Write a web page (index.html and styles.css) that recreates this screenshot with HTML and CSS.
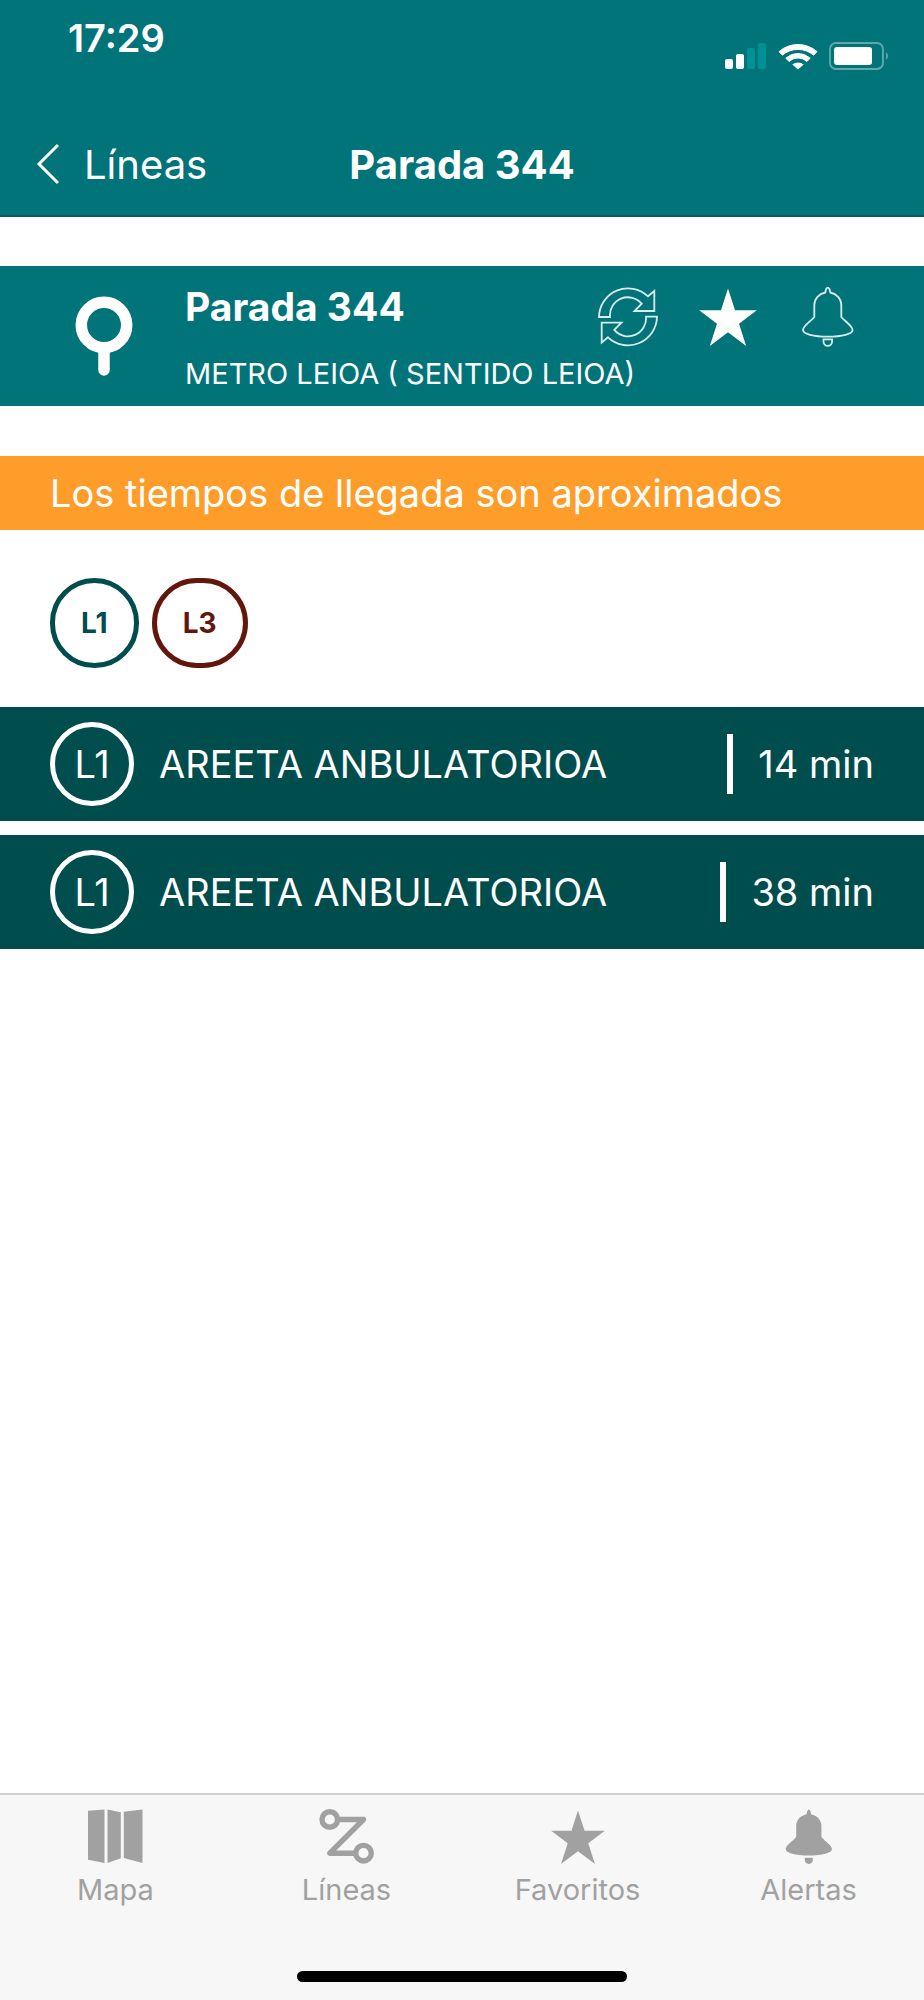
FILE: index.html
```html
<!DOCTYPE html>
<html lang="es">
<head>
    <meta charset="UTF-8">
    <meta name="viewport" content="width=device-width, initial-scale=1.0">
    <title>Parada 344</title>
    <link rel="stylesheet" href="styles.css">
</head>
<body>
    <!-- Shared icons -->
    <svg class="sprite" aria-hidden="true">
        <symbol id="star" viewBox="0 0 60 60">
            <path d="M30 1.5L37 23.3H58.8L41 36.7L48.2 59L30 45.3L11.8 59L19 36.7L1.2 23.3H23Z"/>
        </symbol>
        <symbol id="bell" viewBox="0 0 60 60">
            <path d="M27.3 5.5L28 2.3Q29.8 -1 31.6 2.3L32.3 5.5C39 7 43.3 12 43.3 18V30C47 34.5 54.6 39 54.6 43C54.6 47 44 49.7 29.8 49.7C15.6 49.7 5 47 5 43C5 39 12.5 34.5 16.3 30V18C16.3 12 20.5 7 27.3 5.5Z"/>
            <path d="M25.5 52.3H34.1V54.5A4.3 4.3 0 0 1 25.5 54.5Z"/>
        </symbol>
    </svg>

    <header class="header">
        <div class="status">
            <span class="time">17:29</span>
            <svg class="status-icons" width="164" height="30" viewBox="0 0 164 30">
                <g fill="#fff">
                    <rect x="0" y="18" width="8" height="10" rx="2"/>
                    <rect x="11" y="13" width="8" height="15" rx="2"/>
                    <path d="M54 10.6A29 29 0 0 1 92 10.6L88.6 14.2A24 24 0 0 0 57.4 14.2Z" stroke="#fff" stroke-linejoin="round"/>
                    <path d="M60.8 17.2A18 18 0 0 1 85.2 17.2L81.8 20.4A13 13 0 0 0 64.2 20.4Z" stroke="#fff" stroke-linejoin="round"/>
                    <path d="M67.3 23.6A9 9 0 0 1 78.7 23.6L73 28.5Z"/>
                    <rect x="109" y="6" width="38" height="18" rx="3"/>
                </g>
                <g fill="#009197">
                    <rect x="22" y="7" width="8" height="21" rx="2"/>
                    <rect x="33" y="2" width="8" height="26" rx="2"/>
                </g>
                <rect x="105" y="2" width="53" height="26" rx="6" fill="none" stroke="#5fa9ac" stroke-width="1.8"/>
                <path d="M161 11Q165 15 161 19Z" fill="#5fa9ac"/>
            </svg>
        </div>
        <nav class="nav">
            <a class="back" href="#">
                <svg width="24" height="42" viewBox="0 0 24 42"><path d="M22 2L3 21L22 40" fill="none" stroke="#fff" stroke-width="3"/></svg>
                Líneas
            </a>
            <h1 class="nav-title">Parada 344</h1>
        </nav>
    </header>

    <main class="content">
        <section class="stop">
            <svg class="pin" width="58" height="80" viewBox="0 0 58 80" fill="none" stroke="#fff" stroke-width="11.5">
                <circle cx="29" cy="29" r="22.7"/>
                <path d="M29 52V74" stroke-linecap="round"/>
            </svg>
            <h2 class="stop-title">Parada 344</h2>
            <div class="actions">
                <button aria-label="Actualizar">
                    <svg class="outline" viewBox="0 0 60 60">
                        <path d="M1 30A29 29 0 0 1 50 9.3L56.3 4V24H36.5L43.7 16.7A18 18 0 0 0 12 30Z"/>
                        <path d="M1 30A29 29 0 0 1 50 9.3L56.3 4V24H36.5L43.7 16.7A18 18 0 0 0 12 30Z" transform="rotate(180 30 29.8)"/>
                    </svg>
                </button>
                <button aria-label="Favorito"><svg class="solid"><use href="#star"/></svg></button>
                <button aria-label="Alerta"><svg class="outline"><use href="#bell"/></svg></button>
            </div>
            <p class="stop-name">METRO LEIOA ( SENTIDO LEIOA)</p>
        </section>

        <p class="notice">Los tiempos de llegada son aproximados</p>

        <div class="lines">
            <button class="line l1">L1</button>
            <button class="line l3">L3</button>
        </div>

        <ul class="arrivals">
            <li class="arrival">
                <span class="badge">L1</span>
                <span class="destination">AREETA ANBULATORIOA</span>
                <span class="wait">14 min</span>
            </li>
            <li class="arrival">
                <span class="badge">L1</span>
                <span class="destination">AREETA ANBULATORIOA</span>
                <span class="wait">38 min</span>
            </li>
        </ul>
    </main>

    <footer class="footer">
        <nav class="tabs">
            <a href="#">
                <svg viewBox="0 0 56 56"><path d="M0 1.8L16.5 .5V54L0 50.8ZM19.5 .5L32.8 3.2V49.2L19.5 54ZM35.8 2.8L54.5 .5V54L35.8 49Z"/></svg>
                Mapa
            </a>
            <a href="#">
                <svg viewBox="0 0 56 56">
                    <g fill="none" stroke="#a1a1a1" stroke-width="5.4" stroke-linecap="round" stroke-linejoin="round">
                        <circle cx="10.8" cy="10.5" r="7.8"/>
                        <circle cx="44.5" cy="44.2" r="7.8"/>
                        <path d="M20 10.5H44.5L10.8 44.2H35"/>
                    </g>
                </svg>
                Líneas
            </a>
            <a href="#">
                <svg><use href="#star"/></svg>
                Favoritos
            </a>
            <a href="#">
                <svg><use href="#bell"/></svg>
                Alertas
            </a>
        </nav>
        <div class="home-bar"></div>
    </footer>
</body>
</html>
```
FILE: styles.css
```css
* {
    box-sizing: border-box;
}

body {
    margin: 0;
    min-height: 100vh;
    display: flex;
    flex-direction: column;
    background: #fff;
    color: #fff;
    font-family: Inter, "Liberation Sans", sans-serif;
    font-size: 38px;
    font-weight: 400;
}

h1, h2, p, ul {
    margin: 0;
    padding: 0;
}

a {
    color: inherit;
    text-decoration: none;
}

button {
    padding: 0;
    border: 0;
    background: none;
    font-family: inherit;
}

svg {
    display: block;
}

.sprite {
    position: absolute;
    width: 0;
    height: 0;
}

/* Header */
.header {
    background: #007479;
    border-bottom: 2px solid #045a5e;
}

.status {
    display: flex;
    justify-content: space-between;
    align-items: flex-start;
    height: 113px;
    padding: 14px 35px 0 68px;
}

.time {
    font-weight: 600;
    line-height: 48px;
}

.status-icons {
    margin-top: 27px;
}

.nav {
    display: grid;
    grid-template-columns: 1fr auto 1fr;
    align-items: center;
    height: 102px;
    padding: 0 36px;
}

.back {
    display: flex;
    align-items: center;
    gap: 24px;
    font-size: 40px;
}

.nav-title {
    font-size: 40px;
    font-weight: 700;
}

/* Stop */
.stop {
    display: grid;
    grid-template-columns: 110px 1fr auto;
    grid-template-rows: 71px 40px;
    margin-top: 49px;
    padding: 17px 66px 12px 75px;
    background: #007479;
}

.pin {
    grid-row: 1 / 3;
    align-self: start;
    margin-top: 13px;
}

.stop-title {
    font-size: 39px;
    font-weight: 700;
    line-height: 48px;
}

.stop-name {
    grid-column: 2 / 4;
    font-size: 29px;
    line-height: 40px;
}

.actions {
    display: flex;
    gap: 40px;
    padding-top: 4px;
}

.actions button,
.actions svg {
    width: 60px;
    height: 60px;
}

.outline {
    fill: none;
    stroke: #d9ebec;
    stroke-width: 1.8;
}

.solid {
    fill: #fff;
}

.notice {
    margin-top: 50px;
    padding: 13px 50px;
    background: #ff9d2b;
    line-height: 48px;
}

/* Line filters */
.lines {
    display: flex;
    gap: 13px;
    padding: 48px 50px 39px;
}

.line {
    height: 90px;
    padding: 0 26px;
    border: 5px solid;
    border-radius: 45px;
    font-size: 28px;
    font-weight: 700;
}

.l1 {
    color: #004d4d;
}

.l3 {
    color: #63160b;
}

/* Arrivals */
.arrivals {
    display: flex;
    flex-direction: column;
    gap: 14px;
    list-style: none;
}

.arrival {
    display: flex;
    align-items: center;
    height: 114px;
    padding: 0 50px;
    background: #004d4d;
}

.badge {
    width: 84px;
    height: 84px;
    margin-right: 25px;
    border: 5px solid #fff;
    border-radius: 50%;
    line-height: 74px;
    text-align: center;
}

.destination {
    flex: 1;
}

.wait {
    padding-left: 25px;
    border-left: 6px solid #fff;
    line-height: 60px;
}

/* Bottom tabs */
.footer {
    margin-top: auto;
    padding-bottom: 18px;
    background: #f7f7f7;
    border-top: 2px solid #cfcfcf;
}

.tabs {
    display: grid;
    grid-template-columns: repeat(4, 1fr);
    height: 176px;
    padding-top: 14px;
    color: #a1a1a1;
    font-size: 29px;
    line-height: 50px;
}

.tabs a {
    display: flex;
    flex-direction: column;
    align-items: center;
}

.tabs svg {
    width: 56px;
    height: 56px;
    fill: #a1a1a1;
}

.home-bar {
    width: 330px;
    height: 11px;
    margin: 0 auto;
    border-radius: 6px;
    background: #000;
}
```
